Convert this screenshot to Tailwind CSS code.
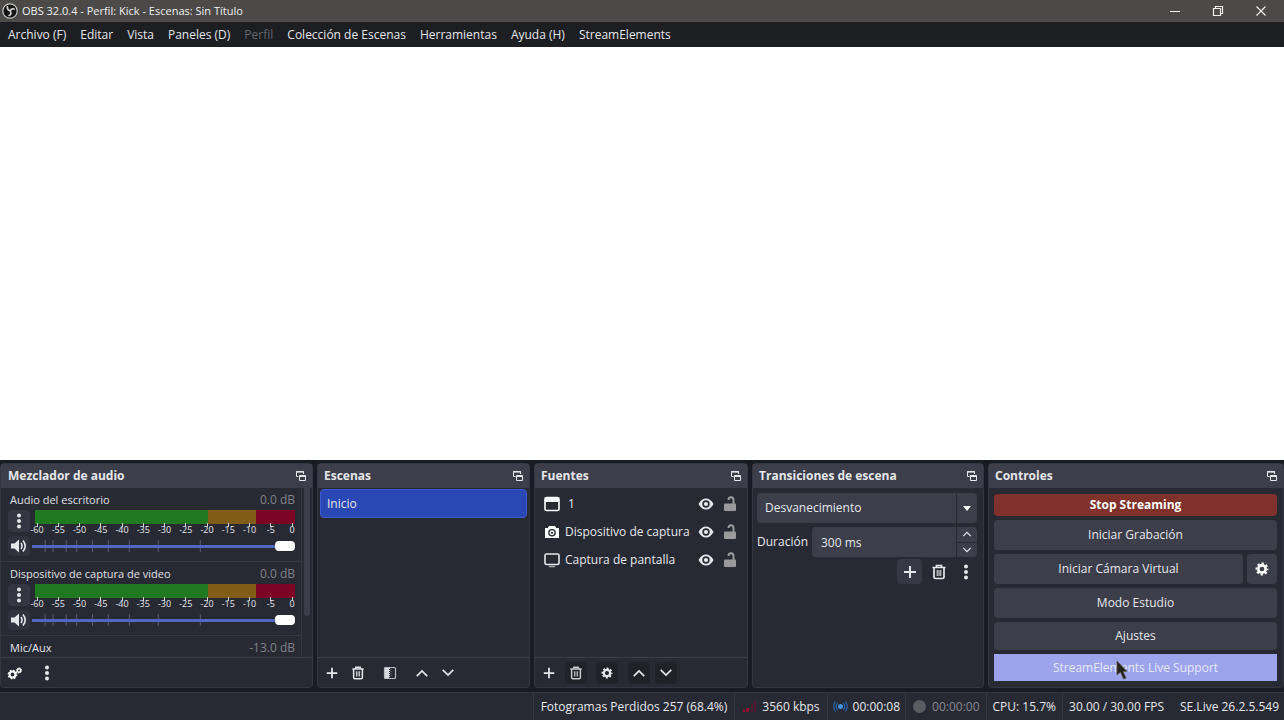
<!DOCTYPE html>
<html lang="es">
<head>
    <meta charset="UTF-8">
    <meta name="viewport" content="width=device-width, initial-scale=1.0">
    <title>OBS 32.0.4 - Perfil: Kick - Escenas: Sin Título</title>
    <script src="https://cdn.jsdelivr.net/npm/@tailwindcss/browser@4"></script>
</head>
<body class="flex flex-col min-h-screen bg-[#1a1b25] text-[#e6e7ea] text-[12px] leading-4 font-['Open_Sans',sans-serif]">
    <!-- Shared icons -->
    <svg class="hidden">
        <symbol id="popout" viewBox="0 0 12 12">
            <path d="M3.500 6.500H1.500V1.500H8.500V4" fill="none" stroke="currentColor" stroke-width="1"/>
            <path d="M1 2h8" stroke="currentColor" stroke-width="1.200"/>
            <path d="M4.500 5.500h6v5h-6z" fill="none" stroke="currentColor"/>
            <path d="M4.500 6.200h6" stroke="currentColor" stroke-width="1.600"/>
        </symbol>
        <symbol id="dots" viewBox="0 0 16 16">
            <circle cx="8" cy="2.500" r="2"/><circle cx="8" cy="8" r="2"/><circle cx="8" cy="13.500" r="2"/>
        </symbol>
        <symbol id="plus" viewBox="0 0 16 16">
            <path d="M8 2v12M2 8h12" stroke="currentColor" stroke-width="2" fill="none"/>
        </symbol>
        <symbol id="trash" viewBox="0 0 16 16">
            <path d="M1.500 3.500h13M5.500 3V1.500h5V3M3 4v9q0 1.500 1.500 1.500h7q1.500 0 1.500-1.500V4" stroke="currentColor" stroke-width="1.700" fill="none"/>
            <path d="M6.200 6v6M8 6v6M9.800 6v6" stroke="currentColor" stroke-width="1"/>
        </symbol>
        <symbol id="up" viewBox="0 0 16 16">
            <path d="M2 11.500L8 5.500l6 6" stroke="currentColor" stroke-width="1.900" fill="none"/>
        </symbol>
        <symbol id="down" viewBox="0 0 16 16">
            <path d="M2 4.500l6 6 6-6" stroke="currentColor" stroke-width="1.900" fill="none"/>
        </symbol>
        <symbol id="gear" viewBox="0 0 16 16">
            <circle cx="8" cy="8" r="4.200" fill="none" stroke="currentColor" stroke-width="3"/>
            <circle cx="8" cy="8" r="6.300" fill="none" stroke="currentColor" stroke-width="2.200" stroke-dasharray="2.700 2.248" stroke-dashoffset="1.350"/>
        </symbol>
        <symbol id="speaker" viewBox="0 0 16 16">
            <path d="M0 5.500h3.500L8 1.500v13L3.500 10.500H0z"/>
            <path d="M10 5q2 3 0 6M12 2.500q4.500 5.500 0 11" stroke="currentColor" stroke-width="1.600" fill="none"/>
        </symbol>
        <symbol id="eye" viewBox="0 0 16 16">
            <path fill-rule="evenodd" d="M0.500 8Q3.500 2.500 8 2.500T15.500 8Q12.500 13.500 8 13.500T0.500 8zM8 4.300a3.700 3.700 0 1 0 0 7.400a3.700 3.700 0 1 0 0-7.400z"/>
            <circle cx="8" cy="8" r="2.100"/>
        </symbol>
        <symbol id="lock" viewBox="0 0 16 16">
            <rect x="2" y="7.500" width="12" height="7.500" rx="1"/>
            <path d="M11.500 8V4.500Q11.500 1.300 9 1.300T6.500 4" stroke="currentColor" stroke-width="2" fill="none"/>
        </symbol>
    </svg>

    <header class="flex items-center h-[22px] pb-px pl-[2px] bg-[#4b4a48]">
        <svg class="size-4 mr-1" viewBox="0 0 16 16">
            <circle cx="8" cy="8" r="7.200" fill="#151515" stroke="#c9c9c9" stroke-width="1.200"/>
            <path d="M5.500 3.200Q4.800 7 8.200 7.800M12.800 6.200Q9.500 5 8.200 7.800M6.500 12.800Q10.200 11.500 8.200 7.800" stroke="#d0d0d0" stroke-width="1.700" fill="none"/>
        </svg>
        <h1 class="flex-1 text-[11px] text-[#f0f0f0]">OBS 32.0.4 - Perfil: Kick - Escenas: Sin Título</h1>
        <button class="w-[42px] h-5 grid place-items-center" aria-label="Minimizar"><svg class="size-3" viewBox="0 0 12 12"><path d="M1 6.500h10" stroke="#eee"/></svg></button>
        <button class="w-[43px] h-5 grid place-items-center" aria-label="Restaurar"><svg class="size-3" viewBox="0 0 12 12"><path d="M1.500 3.500h7v7h-7zM3.500 3.500v-2h7v7h-2" stroke="#eee" stroke-width="1.200" fill="none"/></svg></button>
        <button class="w-[43px] h-5 grid place-items-center mr-[2px]" aria-label="Cerrar"><svg class="size-3" viewBox="0 0 12 12"><path d="M1.500 1.500l9 9M10.500 1.500l-9 9" stroke="#eee" stroke-width="1.200"/></svg></button>
    </header>

    <nav class="flex items-center gap-[14px] h-[25px] px-2 bg-[#1c1e22]">
        <button>Archivo (F)</button>
        <button>Editar</button>
        <button>Vista</button>
        <button>Paneles (D)</button>
        <button class="text-[#63656d]" disabled>Perfil</button>
        <button>Colección de Escenas</button>
        <button>Herramientas</button>
        <button>Ayuda (H)</button>
        <button>StreamElements</button>
    </nav>

    <!-- Preview -->
    <main class="flex-1 bg-white"></main>

    <div class="grid grid-cols-[313fr_213fr_214fr_232fr_296fr] gap-1 h-[228px] pt-[3px]">
        <section class="flex flex-col min-w-0 border border-[#343641] rounded-sm bg-[#272a33]">
            <div class="flex items-center justify-between h-6 pl-[7px] pr-[5px] bg-[#3c3e4a]">
                <h2 class="font-bold">Mezclador de audio</h2>
                <button aria-label="Separar panel"><svg class="size-3"><use href="#popout"/></svg></button>
            </div>
            <div class="flex flex-1 min-h-0">
                <div class="flex-1 min-w-0 overflow-hidden border-r border-[#343641]">
                    <div class="h-[73px] pl-[7px] pr-[6px] pt-1">
                        <div class="flex justify-between pl-[2px] text-[#e0e1e4]"><span class="text-[11px]">Audio del escritorio</span><span class="text-[#80828b]">0.0 dB</span></div>
                        <div class="flex gap-1 mt-[2px]">
                            <button class="w-[22px] h-[22px] grid place-items-center rounded-sm bg-[#343641]" aria-label="Opciones"><svg class="size-4" fill="currentColor"><use href="#dots"/></svg></button>
                            <div class="flex-1">
                                <div class="flex h-[14px] ml-px"><i class="grow-[40] bg-[#1f7a20]"></i><i class="grow-[11] bg-[#805c17]"></i><i class="grow-[9] bg-[#7c0425]"></i></div>
                                <div class="scale flex justify-between pl-[3px] pr-[3px] text-[9px] leading-3"></div>
                            </div>
                        </div>
                        <div class="flex items-center gap-[2px]">
                            <button class="w-[22px] h-5 grid place-items-center rounded-sm bg-[#30323d]" aria-label="Silenciar"><svg class="size-4" fill="currentColor"><use href="#speaker"/></svg></button>
                            <div class="relative flex-1 h-5">
                                <svg class="ticks absolute inset-0 w-full h-full" stroke="#565b74"></svg>
                                <input type="range" value="100" aria-label="Volumen del escritorio" class="relative block w-full h-5 appearance-none bg-transparent [&::-webkit-slider-runnable-track]:h-[3px] [&::-webkit-slider-runnable-track]:bg-[#4f66c4] [&::-webkit-slider-thumb]:appearance-none [&::-webkit-slider-thumb]:w-5 [&::-webkit-slider-thumb]:h-[10px] [&::-webkit-slider-thumb]:-mt-1 [&::-webkit-slider-thumb]:rounded-sm [&::-webkit-slider-thumb]:bg-white">
                            </div>
                        </div>
                    </div>
                    <div class="h-[74px] pl-[7px] pr-[6px] pt-1 border-t border-[#343641]">
                        <div class="flex justify-between pl-[2px] text-[#e0e1e4]"><span class="text-[11px]">Dispositivo de captura de video</span><span class="text-[#80828b]">0.0 dB</span></div>
                        <div class="flex gap-1 mt-[2px]">
                            <button class="w-[22px] h-[22px] grid place-items-center rounded-sm bg-[#343641]" aria-label="Opciones"><svg class="size-4" fill="currentColor"><use href="#dots"/></svg></button>
                            <div class="flex-1">
                                <div class="flex h-[14px] ml-px"><i class="grow-[40] bg-[#1f7a20]"></i><i class="grow-[11] bg-[#805c17]"></i><i class="grow-[9] bg-[#7c0425]"></i></div>
                                <div class="scale flex justify-between pl-[3px] pr-[3px] text-[9px] leading-3"></div>
                            </div>
                        </div>
                        <div class="flex items-center gap-[2px]">
                            <button class="w-[22px] h-5 grid place-items-center rounded-sm bg-[#30323d]" aria-label="Silenciar"><svg class="size-4" fill="currentColor"><use href="#speaker"/></svg></button>
                            <div class="relative flex-1 h-5">
                                <svg class="ticks absolute inset-0 w-full h-full" stroke="#565b74"></svg>
                                <input type="range" value="100" aria-label="Volumen de captura" class="relative block w-full h-5 appearance-none bg-transparent [&::-webkit-slider-runnable-track]:h-[3px] [&::-webkit-slider-runnable-track]:bg-[#4f66c4] [&::-webkit-slider-thumb]:appearance-none [&::-webkit-slider-thumb]:w-5 [&::-webkit-slider-thumb]:h-[10px] [&::-webkit-slider-thumb]:-mt-1 [&::-webkit-slider-thumb]:rounded-sm [&::-webkit-slider-thumb]:bg-white">
                            </div>
                        </div>
                    </div>
                    <div class="flex justify-between pl-[9px] pr-[6px] pt-1 border-t border-[#343641]"><span class="text-[11px]">Mic/Aux</span><span class="text-[#80828b]">-13.0 dB</span></div>
                </div>
                <div class="w-[10px] px-[2px]"><div class="h-[128px] rounded-b-sm bg-[#3c3e4a]"></div></div>
            </div>
            <div class="flex items-center h-[30px] pl-[6px] gap-4 border-t border-[#3c3e49]">
                <button aria-label="Propiedades avanzadas">
                    <svg class="size-4" viewBox="0 0 16 16" fill="none" stroke="#fff">
                        <circle cx="5.500" cy="9.500" r="2.900" stroke-width="2"/>
                        <circle cx="5.500" cy="9.500" r="4.200" stroke-width="1.400" stroke-dasharray="1.700 1.600"/>
                        <circle cx="12" cy="5.500" r="1.700" stroke-width="1.500"/>
                        <circle cx="12" cy="5.500" r="2.600" stroke-width="1" stroke-dasharray="1.100 0.942"/>
                    </svg>
                </button>
                <button aria-label="Menú del mezclador"><svg class="size-4" fill="currentColor"><use href="#dots"/></svg></button>
            </div>
        </section>

        <section class="flex flex-col min-w-0 border border-[#343641] rounded-sm bg-[#272a33]">
            <div class="flex items-center justify-between h-6 pl-[6px] pr-[5px] bg-[#3c3e4a]">
                <h2 class="font-bold">Escenas</h2>
                <button aria-label="Separar panel"><svg class="size-3"><use href="#popout"/></svg></button>
            </div>
            <div class="flex-1 p-[2px] pt-[1px]">
                <button class="block w-full h-[29px] pl-[6px] text-left rounded-sm border border-[#3d5bd0] bg-[#2a48b4]">Inicio</button>
            </div>
            <div class="flex items-center h-[30px] pl-[7px] border-t border-[#3c3e49]">
                <button class="mr-3" aria-label="Añadir escena"><svg class="size-[14px]"><use href="#plus"/></svg></button>
                <button class="mr-[18px]" aria-label="Eliminar escena"><svg class="size-[14px]"><use href="#trash"/></svg></button>
                <button class="mr-[18px]" aria-label="Filtros de escena">
                    <svg class="size-[14px]" viewBox="0 0 14 14">
                        <rect x="1.500" y="1.500" width="11" height="11" rx="1" fill="none" stroke="#b8babf" stroke-width="1.200"/>
                        <path d="M2 2h4v10H2z" fill="#d8d9dc"/><path d="M6.500 2v10" stroke="#d8d9dc" stroke-dasharray="1 1"/><path d="M8 3v8" stroke="#70737c" stroke-dasharray="1 1"/>
                    </svg>
                </button>
                <button class="mr-3" aria-label="Subir escena"><svg class="size-[14px]"><use href="#up"/></svg></button>
                <button aria-label="Bajar escena"><svg class="size-[14px]"><use href="#down"/></svg></button>
            </div>
        </section>

        <section class="flex flex-col min-w-0 border border-[#343641] rounded-sm bg-[#272a33]">
            <div class="flex items-center justify-between h-6 pl-[6px] pr-[5px] bg-[#3c3e4a]">
                <h2 class="font-bold">Fuentes</h2>
                <button aria-label="Separar panel"><svg class="size-3"><use href="#popout"/></svg></button>
            </div>
            <ul class="flex-1 pt-[2px] pl-[9px] pr-[9px]">
                <li class="flex items-center h-7">
                    <svg class="size-4 mr-2" viewBox="0 0 16 16"><rect x="1" y="1.500" width="14" height="13" rx="1.500" fill="none" stroke="#fff" stroke-width="1.600"/><path d="M1 2h14v4H1z" fill="#fff"/></svg>
                    <span class="flex-1">1</span>
                    <button class="mr-2" aria-label="Visible"><svg class="size-4" fill="currentColor"><use href="#eye"/></svg></button>
                    <button class="text-[#9a9a9c]" aria-label="Bloquear"><svg class="size-4" fill="currentColor"><use href="#lock"/></svg></button>
                </li>
                <li class="flex items-center h-7">
                    <svg class="size-4 mr-[5px]" viewBox="0 0 16 16"><path fill="#fff" fill-rule="evenodd" d="M5 2h6l1.200 2H15v10H1V4h2.800zM8 5a3.800 3.800 0 1 0 0 7.600A3.800 3.800 0 1 0 8 5z"/><circle cx="8" cy="8.800" r="1.800" fill="none" stroke="#fff" stroke-width="1.300"/></svg>
                    <span class="flex-1 whitespace-nowrap">Dispositivo de captura</span>
                    <button class="mr-2" aria-label="Visible"><svg class="size-4" fill="currentColor"><use href="#eye"/></svg></button>
                    <button class="text-[#9a9a9c]" aria-label="Bloquear"><svg class="size-4" fill="currentColor"><use href="#lock"/></svg></button>
                </li>
                <li class="flex items-center h-7">
                    <svg class="size-4 mr-[5px]" viewBox="0 0 16 16"><rect x="1" y="2" width="14" height="10.500" rx="1.500" fill="none" stroke="#e8e8ea" stroke-width="1.600"/><path d="M5 14.500h6" stroke="#a8a8ac" stroke-width="1.600"/></svg>
                    <span class="flex-1 whitespace-nowrap">Captura de pantalla</span>
                    <button class="mr-2" aria-label="Visible"><svg class="size-4" fill="currentColor"><use href="#eye"/></svg></button>
                    <button class="text-[#9a9a9c]" aria-label="Bloquear"><svg class="size-4" fill="currentColor"><use href="#lock"/></svg></button>
                </li>
            </ul>
            <div class="flex items-center h-[30px] pl-[3px] border-t border-[#3c3e49]">
                <button class="size-[22px] grid place-items-center mr-[5px]" aria-label="Añadir fuente"><svg class="size-[14px]"><use href="#plus"/></svg></button>
                <button class="size-[22px] grid place-items-center mr-[9px] rounded-sm bg-[#20222a] text-[#c8c9cc]" aria-label="Eliminar fuente"><svg class="size-[14px]"><use href="#trash"/></svg></button>
                <button class="size-[22px] grid place-items-center mr-[10px] rounded-sm bg-[#20222a]" aria-label="Propiedades"><svg class="size-3"><use href="#gear"/></svg></button>
                <button class="size-[22px] grid place-items-center mr-[5px] rounded-sm bg-[#20222a]" aria-label="Subir fuente"><svg class="size-[14px]"><use href="#up"/></svg></button>
                <button class="size-[22px] grid place-items-center rounded-sm bg-[#20222a]" aria-label="Bajar fuente"><svg class="size-[14px]"><use href="#down"/></svg></button>
            </div>
        </section>

        <section class="flex flex-col min-w-0 border border-[#343641] rounded-sm bg-[#272a33]">
            <div class="flex items-center justify-between h-6 pl-[6px] pr-[5px] bg-[#3c3e4a]">
                <h2 class="font-bold">Transiciones de escena</h2>
                <button aria-label="Separar panel"><svg class="size-3"><use href="#popout"/></svg></button>
            </div>
            <div class="pl-1 pr-[6px] pt-[5px]">
                <div class="relative">
                    <select aria-label="Transición" class="block w-full h-[30px] pl-2 rounded-sm bg-[#3c3e4a] appearance-none">
                        <option>Desvanecimiento</option>
                    </select>
                    <div class="absolute right-0 top-0 h-full w-[21px] grid place-items-center border-l border-[#272a33] pointer-events-none"><svg class="w-2 h-[5px]" viewBox="0 0 8 5"><path d="M0 0h8L4 5z" fill="#fff"/></svg></div>
                </div>
                <div class="flex items-center mt-1">
                    <label for="duracion" class="w-[55px]">Duración</label>
                    <input id="duracion" type="text" value="300 ms" class="flex-1 min-w-0 h-[30px] pl-[9px] rounded-l-sm bg-[#3c3e4a]">
                    <div class="flex flex-col w-[21px] h-[30px] rounded-r-sm bg-[#3c3e4a] border-l border-[#272a33]">
                        <button class="flex-1 grid place-items-center border-b border-[#272a33]" aria-label="Aumentar"><svg class="size-[10px]"><use href="#up"/></svg></button>
                        <button class="flex-1 grid place-items-center" aria-label="Reducir"><svg class="size-[10px]"><use href="#down"/></svg></button>
                    </div>
                </div>
                <div class="flex justify-end gap-1 mt-[2px]">
                    <button class="size-[25px] grid place-items-center rounded-sm bg-[#363843]" aria-label="Añadir transición"><svg class="size-4"><use href="#plus"/></svg></button>
                    <button class="size-[25px] grid place-items-center" aria-label="Eliminar transición"><svg class="size-4"><use href="#trash"/></svg></button>
                    <button class="w-[22px] h-[25px] grid place-items-center" aria-label="Opciones de transición"><svg class="size-4" fill="currentColor"><use href="#dots"/></svg></button>
                </div>
            </div>
        </section>

        <section class="flex flex-col min-w-0 border border-[#343641] rounded-sm bg-[#272a33]">
            <div class="flex items-center justify-between h-6 pl-[6px] pr-[5px] bg-[#3c3e4a]">
                <h2 class="font-bold">Controles</h2>
                <button aria-label="Separar panel"><svg class="size-3"><use href="#popout"/></svg></button>
            </div>
            <div class="flex flex-col gap-1 pl-[5px] pr-[6px] pt-[6px]">
                <button class="h-[22px] rounded-sm bg-[#80312b] text-white font-bold">Stop Streaming</button>
                <button class="h-[30px] rounded-sm bg-[#3c3e4a]">Iniciar Grabación</button>
                <div class="flex gap-1">
                    <button class="flex-1 h-[30px] rounded-sm bg-[#3c3e4a]">Iniciar Cámara Virtual</button>
                    <button class="w-[30px] h-[30px] grid place-items-center rounded-sm bg-[#3c3e4a] text-white" aria-label="Configurar cámara virtual"><svg class="size-[14px]"><use href="#gear"/></svg></button>
                </div>
                <button class="h-[30px] rounded-sm bg-[#3c3e4a]">Modo Estudio</button>
                <button class="h-7 rounded-sm bg-[#3c3e4a]">Ajustes</button>
                <button class="relative h-[27px] bg-[#9ea4ec] text-[#e4e8ff]">StreamElements Live Support
                    <svg class="absolute left-[43%] top-[6px] w-3 h-5" viewBox="0 0 12 20"><path d="M1 1v14l3.500-3 3 7 2.500-1-3-6.500H11z" fill="#24221c" stroke="#5c5840" stroke-width="0.700"/></svg>
                </button>
            </div>
        </section>
    </div>

    <footer class="flex justify-end h-8 pt-1 whitespace-nowrap">
        <div class="flex-1 border-t border-[#343641] bg-[#272a33]"></div>
        <div class="flex items-center px-[7px] border-t border-l border-[#343641] bg-[#272a33]">Fotogramas Perdidos 257 (68.4%)</div>
        <div class="flex items-center gap-[5px] px-[7px] border-t border-l border-[#343641] bg-[#272a33]">
            <svg class="size-[15px]" viewBox="0 0 15 15"><path d="M1 10h2v3H1zM4 9h3v4H4z" fill="#8e0d31"/><path d="M9 5h2v8H9zM12 2h2v11h-2z" fill="#511b30"/></svg>
            3560 kbps
        </div>
        <div class="flex items-center gap-[5px] px-[5px] border-t border-l border-[#343641] bg-[#272a33]">
            <svg class="size-[15px]" viewBox="0 0 15 15" fill="none" stroke="#2a62a3" stroke-width="1.300"><circle cx="7.500" cy="7.500" r="2.500" fill="#4493df" stroke="none"/><path d="M4.500 4q-2.500 3.500 0 7M10.500 4q2.500 3.500 0 7M2.500 2.500q-3.500 5 0 10M12.500 2.500q3.500 5 0 10"/></svg>
            00:00:08
        </div>
        <div class="flex items-center gap-[5px] px-[6px] border-t border-l border-[#343641] bg-[#272a33] text-[#868891]">
            <svg class="size-[15px]" viewBox="0 0 15 15"><circle cx="7.500" cy="7.500" r="6.500" fill="#5b5c62"/></svg>
            00:00:00
        </div>
        <div class="flex items-center px-[6px] border-t border-l border-[#343641] bg-[#272a33]">CPU: 15.7%</div>
        <div class="flex items-center pl-[6px] pr-4 border-t border-l border-[#343641] bg-[#272a33]">30.00 / 30.00 FPS</div>
        <div class="flex items-center pr-[5px] border-t border-[#343641] bg-[#272a33]">SE.Live 26.2.5.549</div>
    </footer>

    <script>
        // dB labels under each meter
        document.querySelectorAll('.scale').forEach(function (el) {
            for (var db = -60; db <= 0; db += 5) {
                el.innerHTML += '<span class="relative w-0 flex justify-center"><i class="absolute -top-px w-px h-1 bg-[#d0d2d6]"></i>' + db + '</span>';
            }
        });
        // Volume marks behind each slider, in % of its width
        var marks = [5, 8, 13, 17, 23, 29, 37, 48, 64];
        document.querySelectorAll('.ticks').forEach(function (el) {
            el.innerHTML = marks.map(m => `<line x1="${m}%" x2="${m}%" y1="4" y2="16"/>`).join('');
        });
    </script>
</body>
</html>
